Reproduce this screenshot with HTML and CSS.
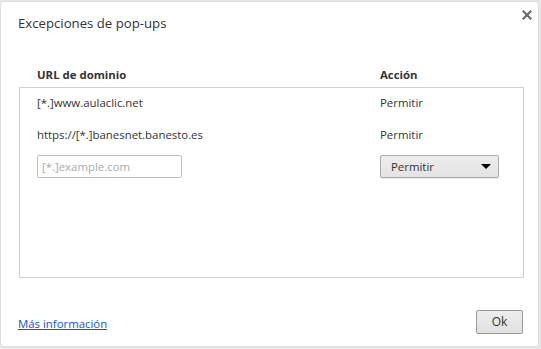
FILE: index.html
```html
<!DOCTYPE html>
<html lang="es">
<head>
<meta charset="utf-8">
<title>Excepciones de pop-ups</title>
<link rel="stylesheet" href="styles.css">
</head>
<body>
<div class="dialog">
  <div class="title-bar">
    <h1 class="title">Excepciones de pop-ups</h1>
    <button class="close" aria-label="Cerrar">
      <svg width="10" height="10" viewBox="0 0 10 10"><path d="M1.5 1.5L8.5 8.5M8.5 1.5L1.5 8.5" stroke="#6a6a6a" stroke-width="2.2" stroke-linecap="square"/></svg>
    </button>
  </div>
  <div class="content">
    <div class="col-heads">
      <div class="col-url">URL de dominio</div>
      <div class="col-act">Acción</div>
    </div>
    <div class="list">
      <div class="row">
        <div class="col-url">[*.]www.aulaclic.net</div>
        <div class="col-act">Permitir</div>
      </div>
      <div class="row">
        <div class="col-url">https://[*.]banesnet.banesto.es</div>
        <div class="col-act">Permitir</div>
      </div>
      <div class="row edit">
        <div class="col-url"><input class="field" type="text" placeholder="[*.]example.com"></div>
        <div class="col-act">
          <div class="select"><span>Permitir</span><span class="arrow"></span></div>
        </div>
      </div>
    </div>
  </div>
  <div class="footer">
    <a class="link" href="#">Más información</a>
    <button class="ok">Ok</button>
  </div>
</div>
</body>
</html>
```
FILE: styles.css
```css
html, body {
  margin: 0;
  padding: 0;
}
body {
  background: #e8e8e8;
  width: 541px;
  height: 349px;
  padding: 2px 3px 3px 1px;
  box-sizing: border-box;
  font-family: "Open Sans", "Noto Sans", "DejaVu Sans", sans-serif;
  font-size: 11.4px;
  color: #333;
}
.dialog {
  position: relative;
  background: #fff;
  border-radius: 3px;
  height: 344px;
  box-shadow: 0 0 2px rgba(0,0,0,0.15);
  display: flex;
  flex-direction: column;
}
.title-bar {
  padding: 12px 17px 0 17px;
  height: 40px;
  box-sizing: border-box;
}
.title {
  margin: 0;
  font-size: 13.2px;
  font-weight: normal;
  color: #333;
  line-height: 18px;
}
.close {
  position: absolute;
  top: 6px;
  right: 4px;
  width: 14px;
  height: 14px;
  padding: 0;
  border: 0;
  background: none;
  display: flex;
  align-items: center;
  justify-content: center;
}
.content {
  padding: 0 14px 0 18px;
  flex: 1;
}
.col-heads {
  display: flex;
  font-weight: bold;
  padding: 25px 0 5px 18px;
  line-height: 15px;
}
.col-url {
  width: 343px;
}
.col-act {
  flex: 1;
}
.list {
  border: 1px solid #d0d0d0;
  height: 191px;
  box-sizing: border-box;
  padding: 0 0 0 17px;
  display: flex;
  flex-direction: column;
  gap: 4px;
}
.row {
  display: flex;
  align-items: center;
  height: 28px;
  flex: none;
}
.row.edit {
  height: 30px;
  align-items: flex-start;
  padding-top: 3px;
}
.field {
  width: 145px;
  height: 23px;
  box-sizing: border-box;
  border: 1px solid #bfbfbf;
  border-radius: 2px;
  padding: 0 4px;
  font-family: inherit;
  font-size: 11.4px;
  outline: none;
}
.field::placeholder {
  color: #aaa;
}
.select {
  width: 119px;
  height: 23px;
  box-sizing: border-box;
  border: 1px solid #aaa;
  border-radius: 2px;
  background: linear-gradient(#ededed, #e3e3e3);
  display: flex;
  align-items: center;
  justify-content: space-between;
  padding: 0 7px 0 10px;
  color: #333;
  box-shadow: 0 1px 0 rgba(0,0,0,0.08);
}
.arrow {
  width: 0;
  height: 0;
  border-left: 5px solid transparent;
  border-right: 5px solid transparent;
  border-top: 5px solid #000;
}
.footer {
  display: flex;
  align-items: center;
  justify-content: space-between;
  padding: 0 15px 6px 17px;
  height: 37px;
}
.link {
  color: #1155cc;
  text-decoration: underline;
  padding-top: 3px;
}
.ok {
  width: 47px;
  height: 24px;
  border: 1px solid #999;
  border-radius: 2px;
  background: linear-gradient(#ededed, #e0e0e0);
  font-family: inherit;
  font-size: 12px;
  color: #333;
  padding: 0;
}
```
